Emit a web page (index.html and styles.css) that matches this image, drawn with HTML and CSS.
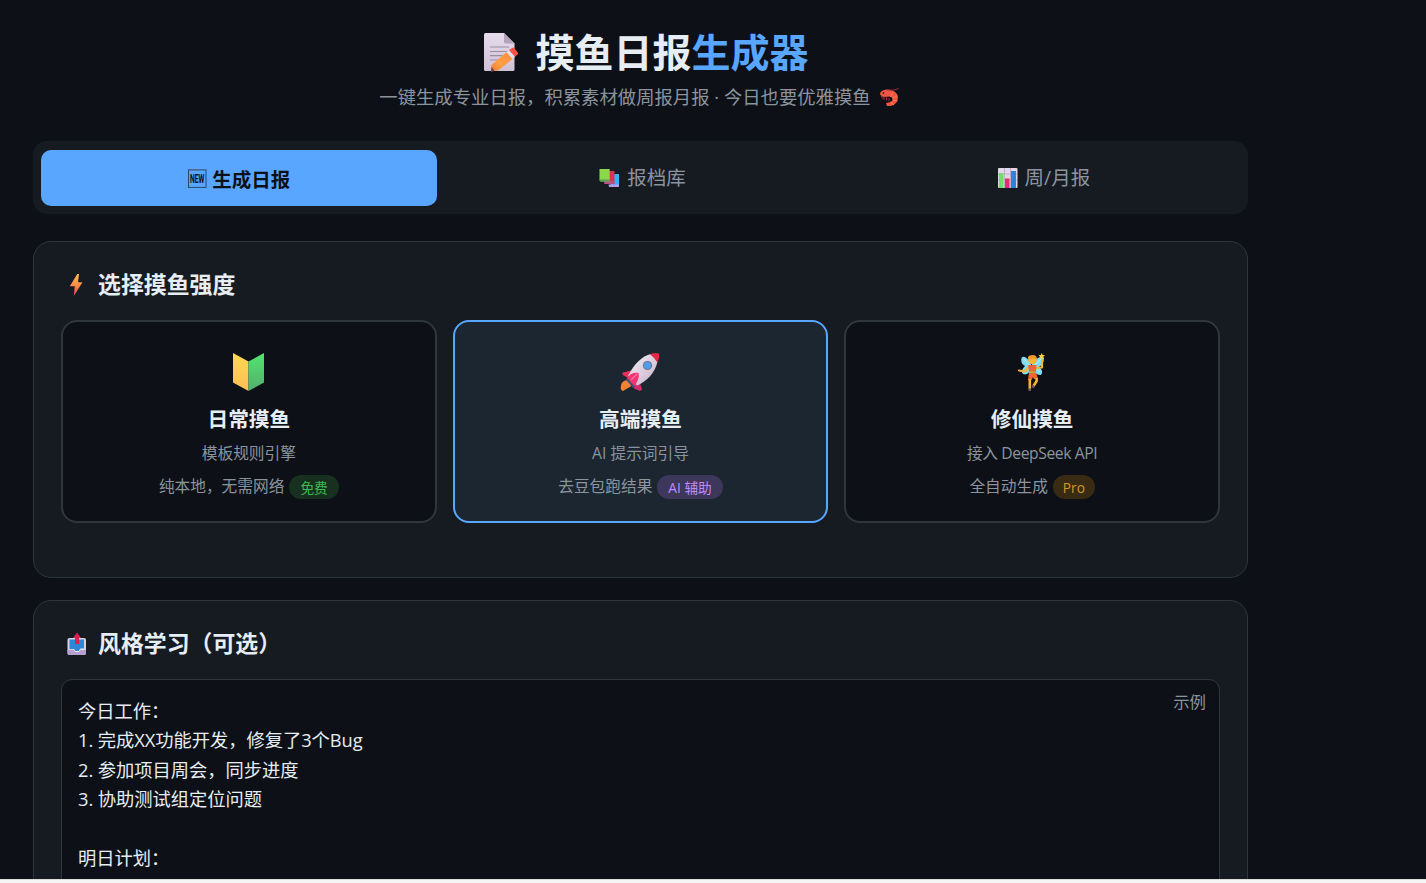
FILE: index.html
```
<!DOCTYPE html>
<html lang="zh-CN">

<head>
	<meta charset="UTF-8">
	<title>摸鱼日报生成器</title>
	<link rel="stylesheet" href="styles.css">
</head>

<body>
	<div class="page">
		<div class="container">
			<header class="header">
				<h1>
					<svg class="icon-memo" width="35" height="39" viewBox="0 0 35 39">
						<defs>
							<linearGradient id="paper" x1="0" y1="0" x2="0" y2="1">
								<stop offset="0" stop-color="#e6dcec" />
								<stop offset="1" stop-color="#cfc0d6" />
							</linearGradient>
							<linearGradient id="pencil" x1="1" y1="0" x2="0" y2="1">
								<stop offset="0" stop-color="#ff8b3d" />
								<stop offset=".6" stop-color="#ffa044" />
								<stop offset="1" stop-color="#e97a35" />
							</linearGradient>
						</defs>
						<path d="M1.500 0H20L30.500 10.500V36.500Q30.500 38 29 38H1.500Q0 38 0 36.500V1.500Q0 0 1.500 0Z" fill="url(#paper)" />
						<path d="M20 0L30.500 10.500H22Q20 10.500 20 8.500Z" fill="#b3a2bc" />
						<path d="M6 14H25M6 18.500H25M6 22.700H20M6 27H14" stroke="#998da4" stroke-width="1.200" />
						<path d="M22.500 19L29 25.500L14.500 37.200L7 38.500L7.500 32Z" fill="url(#pencil)" />
						<path d="M7.500 34L10.500 37.600L7 38.500Z" fill="#694052" />
						<path d="M22.300 19.200L25 17L31 23.800L28.500 26Z" fill="#e2dce9" />
						<path d="M25 17L28.500 14.700Q29.500 14.300 30.500 15.500L33.800 19.500Q34.500 20.700 33.600 21.600L31 23.800Z" fill="#fa5147" />
					</svg>
					<span>摸鱼日报<em>生成器</em></span>
				</h1>
				<p class="subtitle">
					<span>一键生成专业日报，积累素材做周报月报 · 今日也要优雅摸鱼</span>
					<svg class="icon-shrimp" width="21" height="19" viewBox="0 0 21 19">
						<path d="M1 5C3 1 9 1 12 2C18 4 20 8 18.500 12C17 16.500 13 18.500 8 18L7 15L11.500 14C14.500 12.500 14 9.500 11 8.500L5 9Q1 8 1 5Z" fill="#ef5541" />
						<path d="M14 4L11.500 9M18 8L13.500 10M18.500 13L14 12M15 17L11.500 14" stroke="#ff8250" stroke-width="1" />
						<path d="M8 2Q14 3 19.500 .7M2 8L4 11M5 9V12M7.500 9V12.500M10 10V13" fill="none" stroke="#9c2c3c" stroke-width="1" />
						<circle cx="4.500" cy="5" r=".9" fill="#42202c" />
					</svg>
				</p>
			</header>

			<nav class="tabs">
				<button class="tab active">
					<svg width="19" height="20" viewBox="0 0 19 20">
						<rect x=".5" y=".9" width="17.500" height="17.500" fill="none" stroke="#28466b" />
						<text x="2" y="14" class="new-text" textLength="14.500" lengthAdjust="spacingAndGlyphs">NEW</text>
					</svg>
					<span>生成日报</span>
				</button>
				<button class="tab">
					<svg width="21" height="20" viewBox="0 0 21 20">
						<path d="M13 6H20V19H11Z" fill="#32b5ef" />
						<path d="M9.500 16.500H20V19H10Z" fill="#b99de8" />
						<path d="M8 3H15.500V16H5Z" fill="#df2f5b" />
						<path d="M5 13H15V16H6Z" fill="#b84f80" />
						<path d="M.5 1H10.700V13.500H2Q.5 13.500 .5 12Z" fill="#8bd84b" />
						<path d="M.5 11.500H10.700V13.500H2Q.5 13.500 .5 11.500Z" fill="#5b9b62" />
					</svg>
					<span>报档库</span>
				</button>
				<button class="tab">
					<svg width="20" height="21" viewBox="0 0 20 21">
						<rect width="19.500" height="20" rx="1" fill="#e2d8e9" />
						<path d="M0 6H19M0 12H19M6.500 0V20M12.500 0V20" stroke="#bdb0c9" />
						<rect x="1" y="5" width="4.500" height="15" fill="#73dd68" />
						<rect x="7" y="10.500" width="4.500" height="9.500" fill="#e22c76" />
						<rect x="13" y="3" width="5" height="17" fill="#2f82d8" />
					</svg>
					<span>周/月报</span>
				</button>
			</nav>

			<section class="card mode-card">
				<h2>
					<svg width="22" height="24" viewBox="0 0 22 24">
						<defs>
							<linearGradient id="bolt" x1="0" y1="0" x2="0" y2="1">
								<stop offset="0" stop-color="#ffbd4a" />
								<stop offset=".55" stop-color="#ff8648" />
								<stop offset="1" stop-color="#f53850" />
							</linearGradient>
						</defs>
						<path d="M11.300 1L3.800 13.300H8.800L7.800 23L16.500 9.300H12L13 1Z" fill="url(#bolt)" />
					</svg>
					<span>选择摸鱼强度</span>
				</h2>
				<div class="modes">
					<div class="mode">
						<svg width="40" height="40" viewBox="0 0 40 40">
							<defs>
								<linearGradient id="leafL" x1="0" y1="0" x2="0" y2="1">
									<stop offset="0" stop-color="#ffd951" />
									<stop offset="1" stop-color="#ffbd56" />
								</linearGradient>
								<linearGradient id="leafR" x1="0" y1="0" x2="0" y2="1">
									<stop offset="0" stop-color="#50e66f" />
									<stop offset="1" stop-color="#54ad6c" />
								</linearGradient>
							</defs>
							<path d="M4 1L19.500 9.500V39L4 30.500Z" fill="url(#leafL)" />
							<path d="M35 1L19.500 9.500V39L35 30.500Z" fill="url(#leafR)" />
						</svg>
						<h3>日常摸鱼</h3>
						<p>模板规则引擎</p>
						<p class="last"><span>纯本地，无需网络</span><span class="tag free">免费</span></p>
					</div>
					<div class="mode selected">
						<svg width="40" height="40" viewBox="0 0 40 40">
							<defs>
								<linearGradient id="hull" x1="0" y1="0" x2="1" y2="1">
									<stop offset="0" stop-color="#f3f0f4" />
									<stop offset="1" stop-color="#c9afc8" />
								</linearGradient>
							</defs>
							<path d="M7 28Q11 28 12 32Q11 35 8 36L3 39Q.5 38.500 .7 35Q1 29 7 28Z" fill="#f08236" />
							<path d="M11 18.500L3 20.500Q1.500 21 3 23L8 26L12 29Z" fill="#e8305a" />
							<path d="M20 31L22 37.500L20 39L15 37L10 33Z" fill="#d42b6b" />
							<path d="M31 2C22 4 14 12 8 24L17 33.500C27 29 35 21 37.500 9.500Z" fill="url(#hull)" />
							<path d="M30 2.300Q35 0 39 1.500Q40 6 37.300 10.500Q34.500 5.500 30 2.300Z" fill="#e62747" />
							<path d="M7 26L15 34.500L13.500 36L6 28Z" fill="#39547d" />
							<path d="M7 26Q11 20 18.500 21Q20 27 14.500 34Z" fill="#f33574" />
							<path d="M11 28L17 22" stroke="#ff6d98" stroke-width="1.500" />
							<circle cx="27.500" cy="13.500" r="4.600" fill="#766d93" />
							<circle cx="27.500" cy="13.500" r="3.500" fill="#4b9fed" />
						</svg>
						<h3>高端摸鱼</h3>
						<p>AI 提示词引导</p>
						<p class="last"><span>去豆包跑结果</span><span class="tag ai">AI 辅助</span></p>
					</div>
					<div class="mode">
						<svg width="40" height="40" viewBox="-1 0 40 40">
							<path d="M18 12Q12 2 8.500 6Q7 11 12 14Q7 19 10 22Q15 24 18 17ZM19 12Q27 2 31 6Q31 12 26 15Q31 19 28 23Q22 23 19 17Z" fill="#80dcf4" />
							<path d="M11 7L17 14M12 20L17 15M28 7L21 14M27 20L21 15" stroke="#b8eff9" />
							<path d="M14.500 16L12 19.500L6 18.500M24 16L29 15.500L29 8" fill="none" stroke="#f5b530" stroke-width="2.200" stroke-linecap="round" stroke-linejoin="round" />
							<path d="M15 13H23.500L23 20L25 27H21L20 25L18.500 28H15L16 20Z" fill="#ee6536" />
							<circle cx="19.500" cy="8" r="4.300" fill="#f7b735" />
							<path d="M15 8Q14 3.500 18 3.200Q24 2.500 24 7.500Q20 6 17 7Z" fill="#ed9b28" />
							<path d="M16 20.200H23" stroke="#a8c53d" stroke-width="1.300" />
							<path d="M16.800 27V37M23.500 26L23.700 29L20.500 34" fill="none" stroke="#f5b530" stroke-width="2.600" />
							<path d="M15.500 36.500H18V39H15.500ZM19.500 32.500L22 34.500L20.500 36.500L18.800 35Z" fill="#735063" />
							<path d="M28.700 1L29.700 3L32 3.200L30.300 4.800L30.800 7L28.700 6L26.600 7L27 4.800L25.500 3.200L27.800 3Z" fill="#ffd046" />
						</svg>
						<h3>修仙摸鱼</h3>
						<p class="latin">接入 DeepSeek API</p>
						<p class="last"><span>全自动生成</span><span class="tag pro">Pro</span></p>
					</div>
				</div>
			</section>

			<section class="card">
				<h2>
					<svg width="22" height="24" viewBox="0 0 22 24">
						<rect x="1.500" y="6" width="18.500" height="17" rx="2" fill="#d9d0e1" />
						<path d="M1.500 18H20V21Q20 23 18 23H3.500Q1.500 23 1.500 21Z" fill="#b5a0d0" />
						<path d="M3.500 7.500H18V17H14.500L13 19.500H9L7.500 17H3.500Z" fill="#2d86d8" />
						<path d="M7.500 17L9 19.500H13L14.500 17H18" fill="none" stroke="#eee8f2" />
						<path d="M11 .5L15 6H13V12H9V6H7Z" fill="#d72350" />
					</svg>
					<span>风格学习（可选）</span>
				</h2>
				<div class="sample">
					<button class="sample-btn">示例</button>
					<div class="sample-text">今日工作：
1. 完成XX功能开发，修复了3个Bug
2. 参加项目周会，同步进度
3. 协助测试组定位问题

明日计划：</div>
				</div>
			</section>
		</div>
	</div>
	<div class="bottom-bar"></div>
</body>

</html>
```
FILE: styles.css
```
* {
	box-sizing: border-box;
	margin: 0;
	padding: 0;
}

body {
	height: 883px;
	overflow: hidden;
	background: #0d1117;
	color: #e6edf3;
	font-family: "Open Sans", "Noto Sans CJK SC", sans-serif;
}

svg {
	flex: none;
	display: block;
}

.page {
	height: 879px;
	overflow: hidden;
}

.container {
	width: 1215px;
	margin-left: 33px;
	padding-top: 25px;
}

.header {
	height: 116px;
}

h1 {
	display: flex;
	justify-content: center;
	align-items: center;
	gap: 16px;
	height: 54px;
	padding-left: 12px;
	font-size: 39px;
	line-height: 54px;
	font-weight: 700;
}

h1 em {
	color: #58a6ff;
	font-style: normal;
}

.subtitle {
	display: flex;
	justify-content: center;
	align-items: center;
	gap: 8px;
	height: 36px;
	padding-right: 2px;
	color: #8b949e;
	font-size: 18.35px;
	line-height: 36px;
}

.icon-shrimp {
	margin-top: 1px;
}

.tabs {
	display: grid;
	grid-template-columns: repeat(3, 1fr);
	gap: 5px;
	height: 73px;
	padding: 9px 8px 8px;
	background: #161b22;
	border-radius: 14px;
}

.tab {
	display: flex;
	justify-content: center;
	align-items: center;
	gap: 7px;
	padding-left: 4px;
	border: none;
	border-radius: 10px;
	background: transparent;
	color: #8b949e;
	font-family: inherit;
	font-size: 19.5px;
}

.tab span {
	padding-bottom: 4px;
}

.tab.active {
	gap: 5px;
	padding: 1px 0 0;
	background: #58a6ff;
	color: #0d1117;
	font-weight: 700;
}

.tab.active span {
	padding-bottom: 1px;
}

.new-text {
	font: 700 12px Roboto, sans-serif;
	fill: #0d1117;
}

.card {
	margin-top: 22px;
	padding: 27px;
	background: #161b22;
	border: 1px solid #30363d;
	border-radius: 18px;
}

.mode-card {
	height: 337px;
	margin-top: 27px;
}

h2 {
	display: flex;
	align-items: center;
	gap: 10px;
	height: 32px;
	margin-bottom: 19px;
	padding-left: 5px;
	font-size: 22.9px;
	line-height: 32px;
}

.modes {
	display: grid;
	grid-template-columns: repeat(3, 1fr);
	gap: 16px;
}

.mode {
	display: flex;
	flex-direction: column;
	align-items: center;
	height: 203px;
	padding-top: 30px;
	background: #0d1117;
	border: 2px solid #30363d;
	border-radius: 16px;
}

.mode.selected {
	background: #1b2630;
	border-color: #58a6ff;
}

.mode h3 {
	margin-top: 11px;
	font-size: 20.7px;
	line-height: 32px;
}

.mode p {
	margin-top: 3px;
	color: #8b949e;
	font-size: 15.7px;
	line-height: 30px;
}

.mode .latin {
	letter-spacing: -0.4px;
}

.mode .last {
	display: flex;
	align-items: center;
	gap: 5px;
}

.tag {
	height: 24px;
	margin-top: 2px;
	padding: 0 11px;
	border-radius: 12px;
	font-size: 13.7px;
	line-height: 25px;
}

.free {
	background: #18301f;
	color: #3fb950;
}

.ai {
	background: #3d375b;
	color: #bc8cff;
}

.pro {
	padding: 0 10px;
	background: #392b13;
	color: #d29922;
}

.sample {
	position: relative;
	height: 320px;
	padding: 16px;
	background: #0d1117;
	border: 1px solid #30363d;
	border-radius: 11px;
}

.sample-text {
	font-size: 18.3px;
	line-height: 29.4px;
	letter-spacing: -0.05px;
	white-space: pre-line;
}

.sample-btn {
	position: absolute;
	top: 10px;
	right: 13px;
	border: none;
	background: transparent;
	color: #8b949e;
	font-family: inherit;
	font-size: 16.4px;
	line-height: 24px;
}

.bottom-bar {
	height: 4px;
	background: #f5f5f5;
	border-top: 1px solid #dedede;
}
```
